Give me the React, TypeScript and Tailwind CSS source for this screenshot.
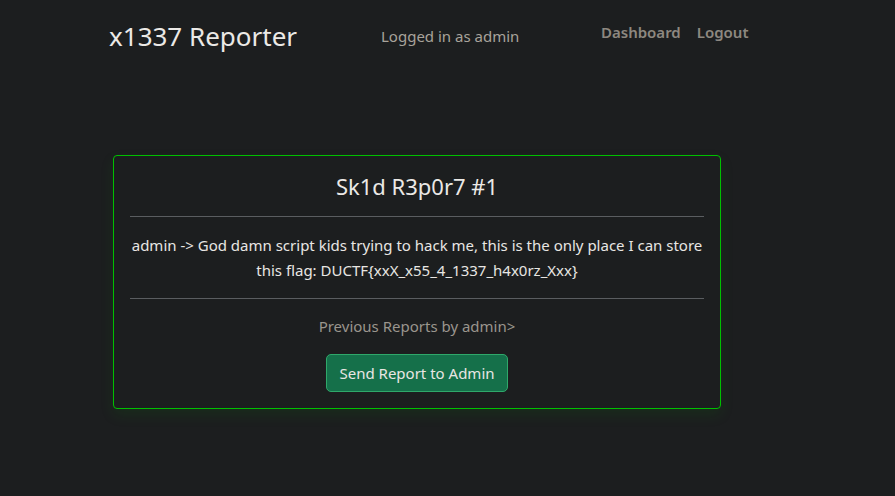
export default function App() {
  return (
    <div
      className="min-h-[496px] w-full bg-[#1c1e1f] text-[#e8e6e3]"
      style={{ fontFamily: '"Noto Sans", sans-serif' }}
    >
      <header className="flex h-[72px] items-center pl-[109px]">
        <div className="w-[272px] text-[26px] leading-none text-[#ebe9e6]">x1337 Reporter</div>
        <div className="w-[220px] text-[15px] leading-none text-[#a8a39b]">Logged in as admin</div>
        <nav className="flex gap-[16px] pb-[7px] text-[15px] font-semibold leading-none text-[#8d8880]">
          <span>Dashboard</span>
          <span>Logout</span>
        </nav>
      </header>
      <main className="pl-[113px] pt-[83px]">
        <div className="w-[608px] rounded-[4px] border border-[#00c000] bg-[#1c1e1f] px-[16px] py-[16px] text-center shadow-[0_6px_14px_rgba(0,150,0,0.12)]">
          <h1 className="text-[22px] leading-[28px] text-[#ebe9e6]">Sk1d R3p0r7 #1</h1>
          <hr className="my-[16px] border-t border-[#5a5d60]" />
          <p className="text-[15px] leading-[25px] text-[#e8e6e3]">
            admin -&gt; God damn script kids trying to hack me, this is the only place I can store this flag:
            DUCTF{'{'}xxX_x55_4_1337_h4x0rz_Xxx{'}'}
          </p>
          <hr className="my-[15px] border-t border-[#5a5d60]" />
          <div className="text-[15px] leading-[24px] text-[#9a958d]">Previous Reports by admin&gt;</div>
          <div className="mt-[16px] flex justify-center">
            <button className="h-[38px] rounded-[5px] border border-[#2fa86a] bg-[#15704a] px-[12px] text-[15px] leading-[24px] text-[#e8e6e3]">
              Send Report to Admin
            </button>
          </div>
        </div>
      </main>
    </div>
  );
}
